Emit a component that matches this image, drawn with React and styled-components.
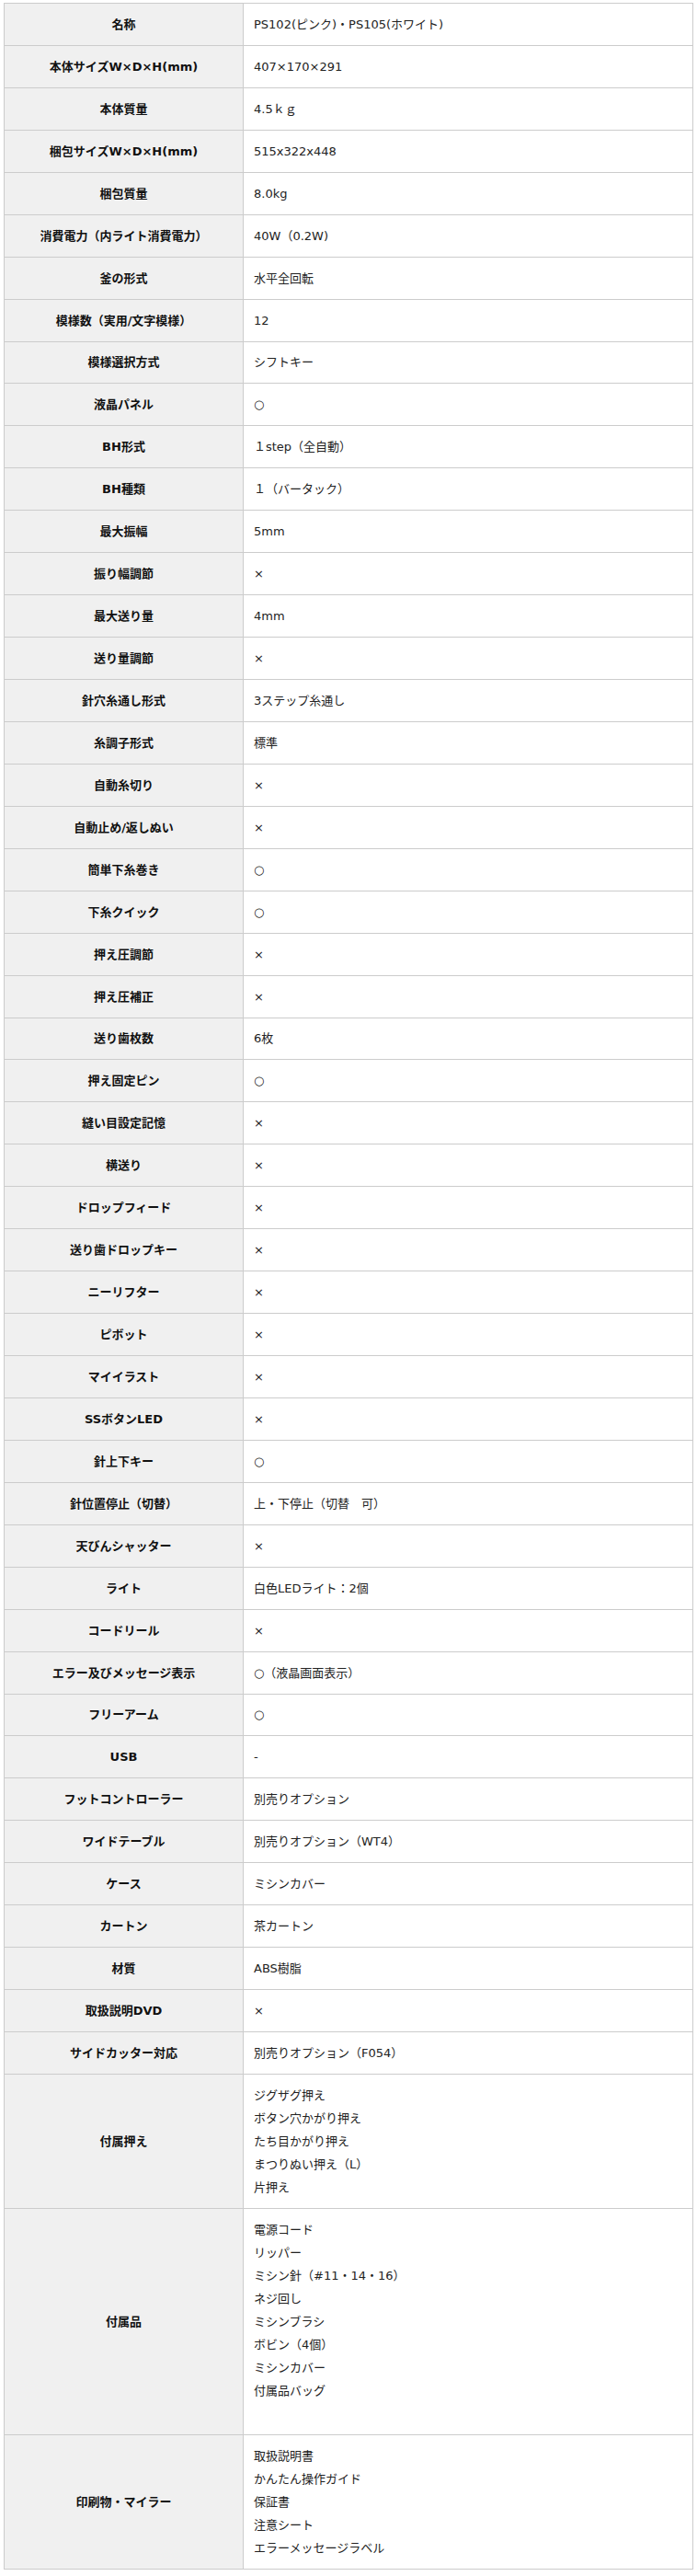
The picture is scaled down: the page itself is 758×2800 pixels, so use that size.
import React from "react";
import styled, { createGlobalStyle } from "styled-components";

const GlobalStyle = createGlobalStyle`
  html, body {
    margin: 0;
    padding: 0;
    background: #ffffff;
  }
  body {
    font-family: "DejaVu Sans", "Noto Sans CJK JP", sans-serif;
    color: #222222;
  }
`;

const Page = styled.div`
  padding: 3px 4px 4px 4px;
`;

const SpecTable = styled.table`
  width: 750px;
  border-collapse: collapse;
  border: 1px solid #cccccc;
  table-layout: fixed;
  font-family: "DejaVu Sans", "Noto Sans CJK JP", sans-serif;
  font-size: 13px;
`;

const LabelCol = styled.col`
  width: 260px;
`;

const LabelCell = styled.th`
  box-sizing: border-box;
  background: #f0f0f0;
  border: 1px solid #cccccc;
  padding: 9.97px 6px;
  line-height: 25px;
  font-weight: 700;
  text-align: center;
  vertical-align: middle;
  color: #111111;
  white-space: nowrap;
`;

const ValueCell = styled.td`
  box-sizing: border-box;
  background: #ffffff;
  border: 1px solid #cccccc;
  padding: 9.97px 12px 9.97px 11px;
  line-height: 25px;
  text-align: left;
  vertical-align: middle;
  color: #222222;
`;

const Line = styled.div`
  min-height: 25px;
  line-height: 25px;
`;

const rows = [
  ["名称", "PS102(ピンク)・PS105(ホワイト)"],
  ["本体サイズW×D×H(mm)", "407×170×291"],
  ["本体質量", "4.5ｋｇ"],
  ["梱包サイズW×D×H(mm)", "515x322x448"],
  ["梱包質量", "8.0kg"],
  ["消費電力（内ライト消費電力）", "40W（0.2W)"],
  ["釜の形式", "水平全回転"],
  ["模様数（実用/文字模様）", "12"],
  ["模様選択方式", "シフトキー"],
  ["液晶パネル", "○"],
  ["BH形式", "１step（全自動）"],
  ["BH種類", "１（バータック）"],
  ["最大振幅", "5mm"],
  ["振り幅調節", "×"],
  ["最大送り量", "4mm"],
  ["送り量調節", "×"],
  ["針穴糸通し形式", "3ステップ糸通し"],
  ["糸調子形式", "標準"],
  ["自動糸切り", "×"],
  ["自動止め/返しぬい", "×"],
  ["簡単下糸巻き", "○"],
  ["下糸クイック", "○"],
  ["押え圧調節", "×"],
  ["押え圧補正", "×"],
  ["送り歯枚数", "6枚"],
  ["押え固定ピン", "○"],
  ["縫い目設定記憶", "×"],
  ["横送り", "×"],
  ["ドロップフィード", "×"],
  ["送り歯ドロップキー", "×"],
  ["ニーリフター", "×"],
  ["ピボット", "×"],
  ["マイイラスト", "×"],
  ["SSボタンLED", "×"],
  ["針上下キー", "○"],
  ["針位置停止（切替）", "上・下停止（切替　可）"],
  ["天びんシャッター", "×"],
  ["ライト", "白色LEDライト：2個"],
  ["コードリール", "×"],
  ["エラー及びメッセージ表示", "○（液晶画面表示）"],
  ["フリーアーム", "○"],
  ["USB", "-"],
  ["フットコントローラー", "別売りオプション"],
  ["ワイドテーブル", "別売りオプション（WT4）"],
  ["ケース", "ミシンカバー"],
  ["カートン", "茶カートン"],
  ["材質", "ABS樹脂"],
  ["取扱説明DVD", "×"],
  ["サイドカッター対応", "別売りオプション（F054）"],
  [
    "付属押え",
    [
      "ジグザグ押え",
      "ボタン穴かがり押え",
      "たち目かがり押え",
      "まつりぬい押え（L）",
      "片押え",
    ],
  ],
  [
    "付属品",
    [
      "電源コード",
      "リッパー",
      "ミシン針（#11・14・16）",
      "ネジ回し",
      "ミシンブラシ",
      "ボビン（4個）",
      "ミシンカバー",
      "付属品バッグ",
      "",
    ],
  ],
  [
    "印刷物・マイラー",
    ["取扱説明書", "かんたん操作ガイド", "保証書", "注意シート", "エラーメッセージラベル"],
  ],
];

export default function App() {
  return (
    <Page>
      <GlobalStyle />
      <SpecTable>
        <colgroup>
          <LabelCol />
          <col />
        </colgroup>
        <tbody>
          {rows.map(([label, value]) => (
            <tr key={label}>
              <LabelCell scope="row">{label}</LabelCell>
              <ValueCell>
                {Array.isArray(value)
                  ? value.map((v, i) => <Line key={i}>{v}</Line>)
                  : value}
              </ValueCell>
            </tr>
          ))}
        </tbody>
      </SpecTable>
    </Page>
  );
}
